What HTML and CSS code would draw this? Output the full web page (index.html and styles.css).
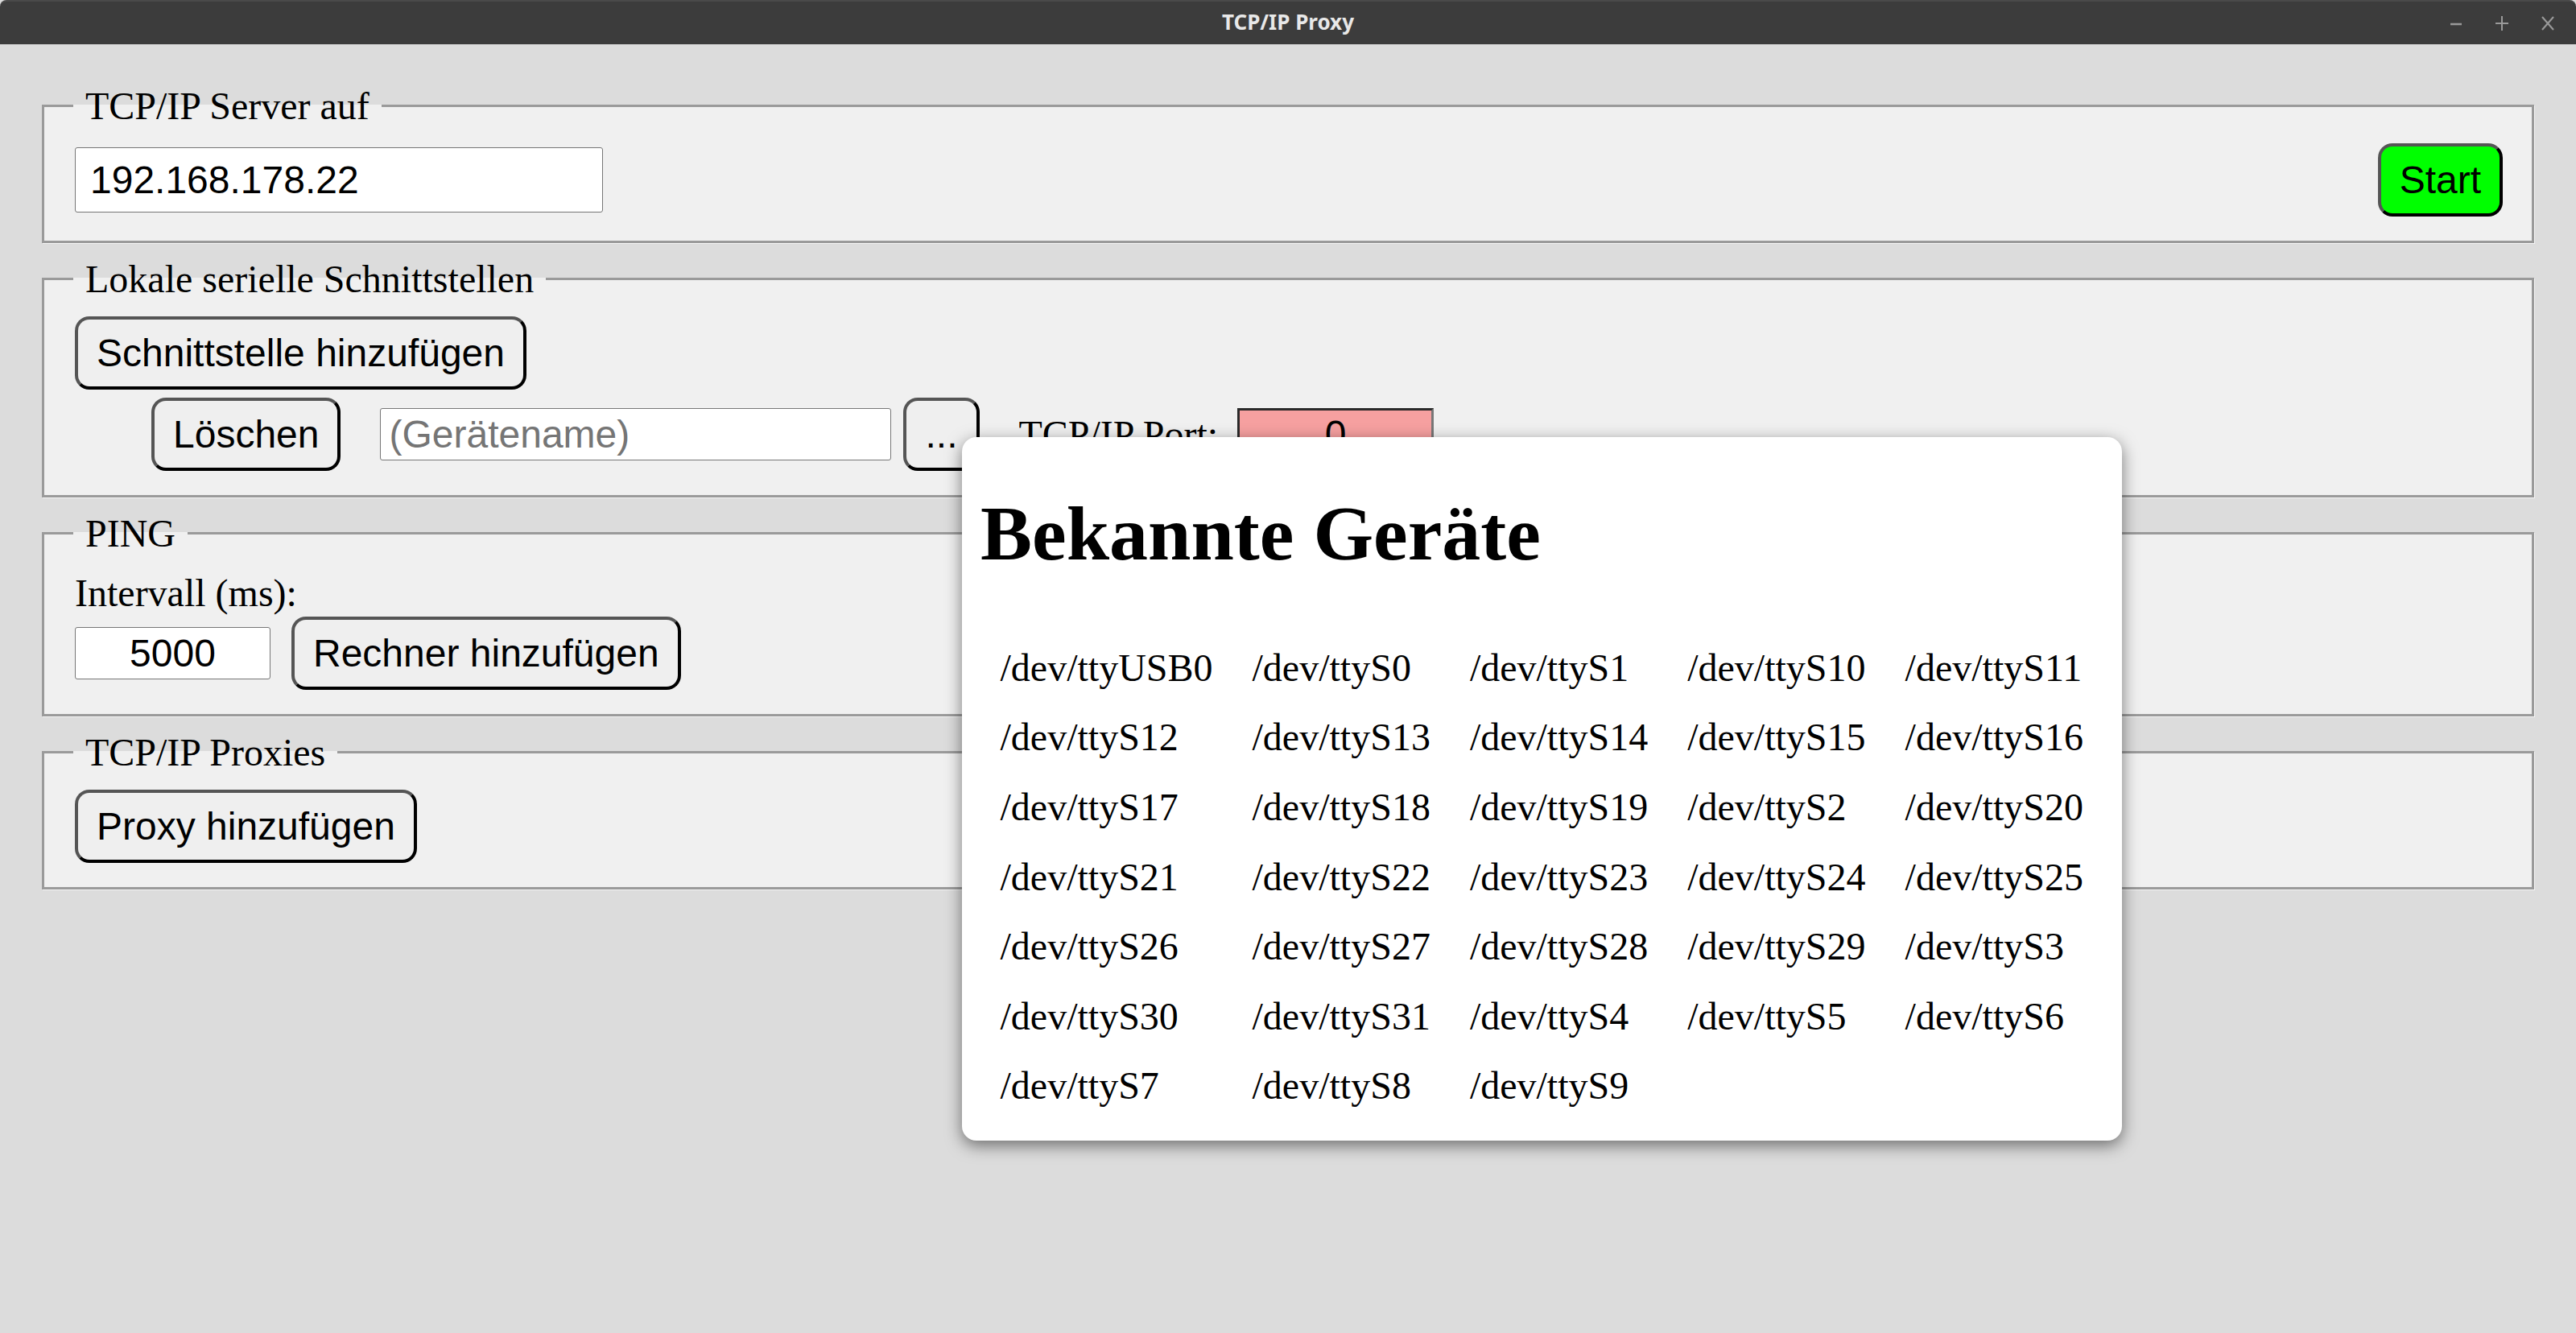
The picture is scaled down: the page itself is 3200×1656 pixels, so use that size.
FILE: index.html
```html
<!DOCTYPE html>
<html lang="de">
<head>
<meta charset="utf-8">
<title>TCP/IP Proxy</title>
<link rel="stylesheet" href="styles.css">
</head>
<body>
<header class="titlebar">
  <div class="titlebar-side"></div>
  <div class="titlebar-title">TCP/IP Proxy</div>
  <div class="titlebar-side titlebar-controls">
    <svg class="ctl" width="22" height="22" viewBox="0 0 22 22"><line x1="4" y1="12" x2="18" y2="12" stroke="#9a9a9a" stroke-width="2.5"/></svg>
    <svg class="ctl" width="22" height="22" viewBox="0 0 22 22"><line x1="3" y1="11" x2="19" y2="11" stroke="#9a9a9a" stroke-width="2"/><line x1="11" y1="2" x2="11" y2="20" stroke="#9a9a9a" stroke-width="2"/></svg>
    <svg class="ctl" width="22" height="22" viewBox="0 0 22 22"><line x1="4" y1="3" x2="18" y2="19" stroke="#9a9a9a" stroke-width="2"/><line x1="18" y1="3" x2="4" y2="19" stroke="#9a9a9a" stroke-width="2"/></svg>
  </div>
</header>

<main class="content">
  <fieldset class="group">
    <legend class="group-legend">TCP/IP Server auf</legend>
    <div class="row row-spread">
      <input class="field field-ip" type="text" value="192.168.178.22">
      <button class="btn btn-start">Start</button>
    </div>
  </fieldset>

  <fieldset class="group">
    <legend class="group-legend">Lokale serielle Schnittstellen</legend>
    <div class="row">
      <button class="btn">Schnittstelle hinzufügen</button>
    </div>
    <div class="row row-device">
      <button class="btn">Löschen</button>
      <input class="field field-name" type="text" placeholder="(Gerätename)">
      <button class="btn btn-dots">...</button>
      <span class="label label-port">TCP/IP Port:</span>
      <input class="field field-port" type="text" value="0">
    </div>
  </fieldset>

  <fieldset class="group">
    <legend class="group-legend">PING</legend>
    <div class="label">Intervall (ms):</div>
    <div class="row row-ping">
      <input class="field field-interval" type="text" value="5000">
      <button class="btn">Rechner hinzufügen</button>
    </div>
  </fieldset>

  <fieldset class="group">
    <legend class="group-legend">TCP/IP Proxies</legend>
    <div class="row">
      <button class="btn">Proxy hinzufügen</button>
    </div>
  </fieldset>
</main>

<section class="popup">
  <h1 class="popup-title">Bekannte Geräte</h1>
  <div class="device-grid">
    <div class="device">/dev/ttyUSB0</div>
    <div class="device">/dev/ttyS0</div>
    <div class="device">/dev/ttyS1</div>
    <div class="device">/dev/ttyS10</div>
    <div class="device">/dev/ttyS11</div>
    <div class="device">/dev/ttyS12</div>
    <div class="device">/dev/ttyS13</div>
    <div class="device">/dev/ttyS14</div>
    <div class="device">/dev/ttyS15</div>
    <div class="device">/dev/ttyS16</div>
    <div class="device">/dev/ttyS17</div>
    <div class="device">/dev/ttyS18</div>
    <div class="device">/dev/ttyS19</div>
    <div class="device">/dev/ttyS2</div>
    <div class="device">/dev/ttyS20</div>
    <div class="device">/dev/ttyS21</div>
    <div class="device">/dev/ttyS22</div>
    <div class="device">/dev/ttyS23</div>
    <div class="device">/dev/ttyS24</div>
    <div class="device">/dev/ttyS25</div>
    <div class="device">/dev/ttyS26</div>
    <div class="device">/dev/ttyS27</div>
    <div class="device">/dev/ttyS28</div>
    <div class="device">/dev/ttyS29</div>
    <div class="device">/dev/ttyS3</div>
    <div class="device">/dev/ttyS30</div>
    <div class="device">/dev/ttyS31</div>
    <div class="device">/dev/ttyS4</div>
    <div class="device">/dev/ttyS5</div>
    <div class="device">/dev/ttyS6</div>
    <div class="device">/dev/ttyS7</div>
    <div class="device">/dev/ttyS8</div>
    <div class="device">/dev/ttyS9</div>
  </div>
</section>
</body>
</html>
```

FILE: styles.css
```css
html, body {
  margin: 0;
  padding: 0;
}

body {
  position: relative;
  width: 3200px;
  height: 1656px;
  overflow: hidden;
  background: #dcdcdc;
  font-family: "Liberation Serif", "Times New Roman", serif;
  font-size: 48px;
  color: #000;
}

/* ---------- title bar ---------- */
.titlebar {
  height: 55px;
  box-sizing: border-box;
  display: grid;
  grid-template-columns: 1fr auto 1fr;
  align-items: center;
  background: #3c3c3c;
  border-top: 2px solid #4a4a4a;
  border-radius: 8px 8px 0 0;
}

.titlebar-title {
  font-family: "Noto Sans", "Open Sans", sans-serif;
  font-weight: bold;
  font-size: 26px;
  color: #e8e8e8;
  line-height: 1;
  padding-bottom: 4px;
}

.titlebar-controls {
  display: flex;
  justify-content: flex-end;
  align-items: center;
  gap: 35px;
  padding-right: 24px;
}

.ctl {
  display: block;
}

/* ---------- main content ---------- */
.content {
  padding-top: 49px;
}

.group {
  margin: 0 52px 17px;
  padding: 19px 36px 30px 38px;
  background: #f0f0f0;
  border: 3px solid #9a9a9a;
  box-shadow: 1px 1px 0 #f6f6f6;
  min-width: 0;
}

.group-legend {
  margin-left: -2px;
  padding: 0 15px;
  font-size: 48px;
  line-height: normal;
}

.row {
  display: flex;
  align-items: center;
}

.row-spread {
  justify-content: space-between;
}

.row-device {
  margin-top: 10px;
  margin-left: 95px;
}

.row-ping {
  margin-top: 2px;
}

.label {
  font-family: "Liberation Serif", "Times New Roman", serif;
  font-size: 48px;
  line-height: normal;
}

.label-port {
  margin-left: 49px;
  margin-right: 24px;
}

/* ---------- buttons ---------- */
.btn {
  font-family: "Liberation Sans", Arial, sans-serif;
  font-size: 48px;
  line-height: normal;
  color: #000;
  background: #efefef;
  padding: 14px 23px;
  margin: 0;
  border-style: solid;
  border-width: 4px;
  border-color: #555 #000 #000 #555;
  border-radius: 18px;
}

.btn-start {
  background: #00ff00;
}

.btn-dots {
  margin-left: 15px;
}

.row-ping .btn {
  margin-left: 26px;
}

/* ---------- inputs ---------- */
.field {
  font-family: "Liberation Sans", Arial, sans-serif;
  font-size: 48px;
  line-height: normal;
  color: #000;
  background: #fff;
  border: 1px solid #767676;
  border-radius: 3px;
  margin: 0;
  box-sizing: border-box;
  outline: none;
}

.field::placeholder {
  color: #757575;
}

.field-ip {
  width: 656px;
  padding: 12px 18px;
}

.field-name {
  width: 635px;
  padding: 4px 10px;
  margin-left: 49px;
}

.field-interval {
  width: 243px;
  padding: 4px 8px;
  text-align: center;
}

.field-port {
  width: 244px;
  padding: 2px 8px;
  text-align: center;
  background: #f6a0a0;
  border-width: 3px;
  border-style: solid;
  border-color: #2a2a2a #777 #777 #2a2a2a;
  border-radius: 0;
}

/* ---------- popup ---------- */
.popup {
  position: absolute;
  left: 1195px;
  top: 543px;
  padding: 0 24px 25px 23px;
  background: #fff;
  border-radius: 18px;
  box-shadow: 0 6px 20px rgba(0, 0, 0, 0.5);
}

.popup-title {
  margin: 64px 0 68px;
  font-size: 96px;
  font-weight: bold;
  line-height: normal;
}

.device-grid {
  display: grid;
  grid-template-columns: repeat(5, auto);
  justify-content: start;
}

.device {
  padding: 15.8px 24.5px;
  line-height: normal;
  white-space: nowrap;
}
```
